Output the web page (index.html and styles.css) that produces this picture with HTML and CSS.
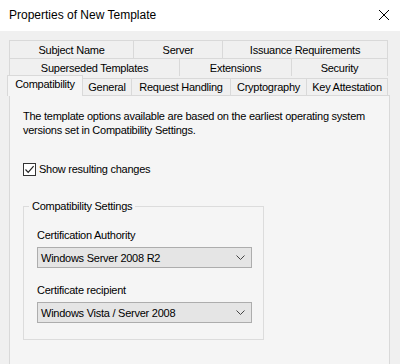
FILE: index.html
```html
<!DOCTYPE html>
<html>
<head>
<meta charset="utf-8">
<link rel="stylesheet" href="styles.css">
</head>
<body>
<div class="window">
  <div class="titlebar">
    <span class="title">Properties of New Template</span>
    <svg class="close" width="12" height="12" viewBox="0 0 12 12"><path d="M1 1 L11 11 M11 1 L1 11" stroke="#000" stroke-width="1" fill="none"/></svg>
  </div>
  <div class="body">
    <div class="tabrow back">
      <div class="tab w-subject">Subject Name</div>
      <div class="tab w-server">Server</div>
      <div class="tab w-issuance">Issuance Requirements</div>
    </div>
    <div class="tabrow back">
      <div class="tab w-superseded">Superseded Templates</div>
      <div class="tab w-extensions">Extensions</div>
      <div class="tab w-security">Security</div>
    </div>
    <div class="tabrow front">
      <div class="tab selected w-compat">Compatibility</div>
      <div class="tab w-general">General</div>
      <div class="tab w-request">Request Handling</div>
      <div class="tab w-crypto">Cryptography</div>
      <div class="tab w-key">Key Attestation</div>
    </div>
    <div class="panel">
      <p class="intro">The template options available are based on the earliest operating system versions set in Compatibility Settings.</p>
      <label class="check">
        <span class="box"><svg width="11" height="11" viewBox="0 0 11 11"><path d="M1.5 5.5 L4.2 8.3 L9.6 2.2" stroke="#222" stroke-width="1.2" fill="none"/></svg></span>
        <span>Show resulting changes</span>
      </label>
      <fieldset class="group">
        <legend>Compatibility Settings</legend>
        <div class="group-inner">
          <div class="field-label">Certification Authority</div>
          <div class="combo"><span>Windows Server 2008 R2</span><svg width="9" height="5" viewBox="0 0 9 5"><path d="M0.5 0.5 L4.5 4.5 L8.5 0.5" stroke="#444" fill="none"/></svg></div>
          <div class="field-label second">Certificate recipient</div>
          <div class="combo"><span>Windows Vista / Server 2008</span><svg width="9" height="5" viewBox="0 0 9 5"><path d="M0.5 0.5 L4.5 4.5 L8.5 0.5" stroke="#444" fill="none"/></svg></div>
        </div>
      </fieldset>
    </div>
  </div>
</div>
</body>
</html>
```
FILE: styles.css
```css
* { box-sizing: border-box; }
html, body { margin: 0; padding: 0; }
body {
  font-family: "Liberation Sans", Arial, sans-serif;
  font-size: 11px;
  letter-spacing: -0.25px;
  color: #000;
  background: #f0f0f0;
}
.window {
  width: 400px;
  height: 364px;
  background: #f0f0f0;
  overflow: hidden;
}
.titlebar {
  height: 31px;
  background: #fff;
  display: flex;
  align-items: center;
  justify-content: space-between;
  padding: 0 10px 2px 9px;
}
.title {
  font-size: 12px;
  letter-spacing: 0;
}
.close { display: block; }
.body {
  padding-top: 9px;
}
.tabrow {
  display: flex;
  height: 18px;
}
.tabrow.back { margin-left: 9px; }
.tabrow.front {
  margin-left: 7px;
  align-items: flex-end;
  height: 19px;
  position: relative;
  z-index: 2;
}
.tab {
  border: 1px solid #d9d9d9;
  border-bottom: none;
  margin-right: -1px;
  background: #f0f0f0;
  display: flex;
  align-items: center;
  justify-content: center;
  height: 18px;
  white-space: nowrap;
}
.tabrow.front .tab { height: 17px; }
.tabrow.front .tab.selected {
  height: 21px;
  background: #f5f5f5;
  margin-bottom: -1px;
  align-items: flex-start;
  padding-top: 2px;
}
.w-subject { width: 125px; }
.w-server { width: 90px; }
.w-issuance { width: 166px; }
.w-superseded { width: 171px; }
.w-extensions { width: 113px; }
.w-security { width: 97px; }
.w-compat { width: 76px; }
.w-general { width: 50px; }
.w-request { width: 100px; }
.w-crypto { width: 77px; }
.w-key { width: 82px; }
.panel {
  margin-left: 9px;
  width: 381px;
  height: 280px;
  border: 1px solid #d9d9d9;
  background: #f5f5f5;
  padding: 13px 14px 0 13px;
}
.intro {
  margin: 0;
  line-height: 14px;
}
.check {
  display: flex;
  align-items: center;
  margin-top: 25px;
  height: 14px;
}
.box {
  width: 13px;
  height: 13px;
  border: 1px solid #333;
  background: #fff;
  display: flex;
  align-items: center;
  justify-content: center;
  margin-right: 3px;
}
.box svg { display: block; }
.group {
  margin: 23px 0 0 0;
  width: 241px;
  height: 141px;
  border: 1px solid #dcdcdc;
  padding: 0;
}
.group legend {
  padding: 0 3px;
  margin-left: 5px;
  line-height: 14px;
}
.group-inner {
  padding: 15px 0 0 13px;
}
.field-label {
  line-height: 14px;
}
.field-label.second { margin-top: 15px; }
.combo {
  margin-top: 5px;
  width: 215px;
  height: 21px;
  border: 1px solid #adadad;
  background: #e5e5e5;
  display: flex;
  align-items: center;
  justify-content: space-between;
  padding: 0 6px 0 3px;
}
.combo svg { display: block; }
```
